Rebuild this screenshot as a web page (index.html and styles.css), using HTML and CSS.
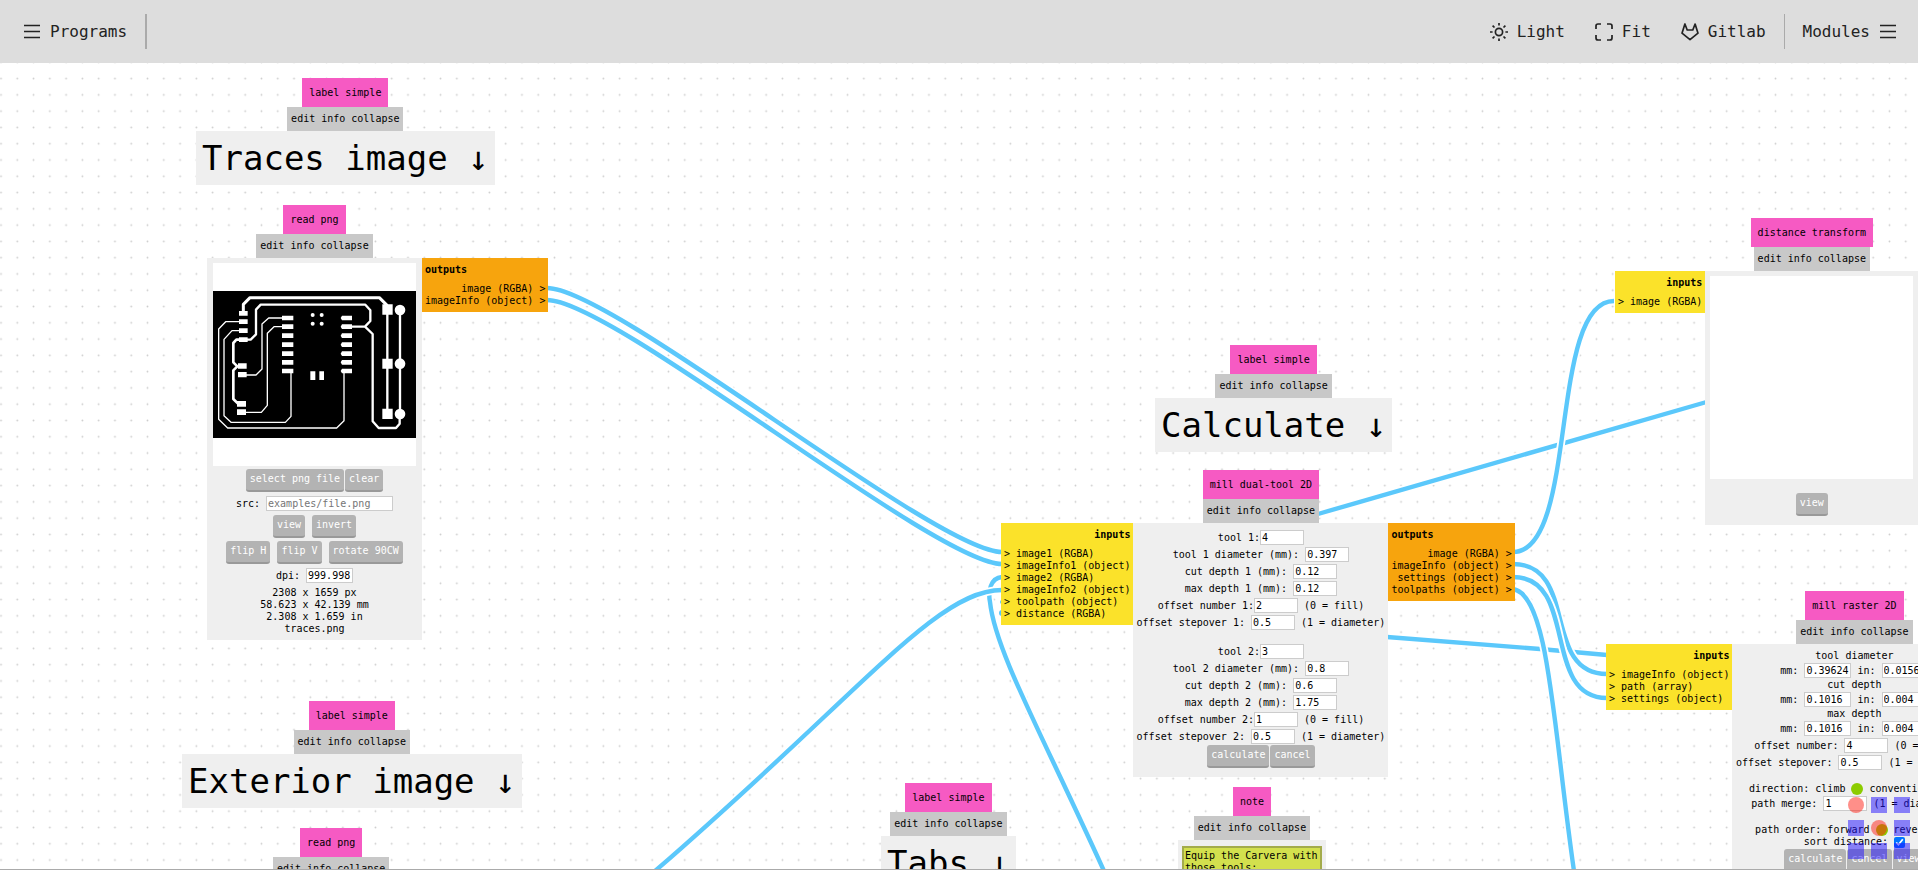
FILE: index.html
```html
<!DOCTYPE html>
<html lang="en">
<head>
<meta charset="utf-8">
<title>Programs</title>
<link rel="stylesheet" href="styles.css">
</head>
<body>
<header class="bar">
  <nav class="bar-group">
    <button class="bar-item" type="button"><svg class="icon" viewBox="0 0 18 18"><path d="M1 2.5h16M1 8.5h16M1 14.5h16"/></svg>Programs</button>
    <span class="divider divider-thick"></span>
  </nav>
  <nav class="bar-group">
    <button class="bar-item" type="button"><svg class="icon" viewBox="0 0 18 18"><circle cx="9" cy="9" r="3.6"/><path d="M9 0v2.6M9 15.4V18M0 9h2.6M15.4 9H18M2.6 2.6l1.9 1.9M13.5 13.5l1.9 1.9M2.6 15.4l1.9-1.9M13.5 4.5l1.9-1.9"/></svg>Light</button>
    <button class="bar-item" type="button"><svg class="icon" viewBox="0 0 18 18"><path d="M1 6V3q0-2 2-2h3M12 1h3q2 0 2 2v3M17 12v3q0 2-2 2h-3M6 17H3q-2 0-2-2v-3"/></svg>Fit</button>
    <a class="bar-item" href="#gitlab"><svg class="icon" viewBox="0 0 18 18"><path d="M3.9 1L1 10.2 9 16.6l8-6.4L14.1 1l-2.3 6H6.2z"/></svg>Gitlab</a>
    <span class="divider"></span>
    <button class="bar-item" type="button">Modules<svg class="icon" viewBox="0 0 18 18"><path d="M1 2.5h16M1 8.5h16M1 14.5h16"/></svg></button>
  </nav>
</header>

<main class="board">
  <svg class="wires" aria-hidden="true">
    <defs>
      <pattern id="dots" patternUnits="userSpaceOnUse" x="9.14" y="7.46" width="16.28" height="16.28"><circle cx="8.14" cy="8.14" r=".9" fill="#ccc"/></pattern>
      <path id="w1" d="M1002 577C990 578 988 592 990 602C995 650 1040 730 1104 871"/>
      <path id="w2" d="M1002 590C936 590 860 694 655 871"/>
      <path id="w3" d="M547 288C613 288 936 552 1002 552"/>
      <path id="w4" d="M547 300C613 300 936 564 1002 564"/>
      <path id="w5" d="M1318 514L1710 401"/>
      <path id="w6" d="M1387 637L1540 649L1607 655"/>
      <path id="w7" d="M1513 552C1579 552 1548 301 1614 301"/>
      <path id="w8" d="M1513 564C1579 564 1541 674 1607 674"/>
      <path id="w9" d="M1513 577C1579 577 1541 698 1607 698"/>
      <path id="w10" d="M1513 589C1549 595 1553 725 1574 871"/>
    </defs>
    <rect width="100%" height="100%" fill="url(#dots)"/>
    <g transform="translate(0 -63)">
      <use href="#w1" class="halo"/><use href="#w1" class="wire"/>
      <use href="#w2" class="halo"/><use href="#w2" class="wire"/>
      <use href="#w3" class="halo"/><use href="#w3" class="wire"/>
      <use href="#w4" class="halo"/><use href="#w4" class="wire"/>
      <use href="#w5" class="halo"/><use href="#w5" class="wire"/>
      <use href="#w6" class="halo"/><use href="#w6" class="wire"/>
      <use href="#w7" class="halo"/><use href="#w7" class="wire"/>
      <use href="#w8" class="halo"/><use href="#w8" class="wire"/>
      <use href="#w9" class="halo"/><use href="#w9" class="wire"/>
      <use href="#w10" class="halo"/><use href="#w10" class="wire"/>
      <circle cx="1002" cy="602" r="2" class="stub"/><circle cx="1002" cy="613" r="3" class="stub"/>
    </g>
  </svg>

  <section class="node node-traces">
    <h2 class="title">label simple</h2>
    <div class="tools"><button type="button">edit</button><button type="button">info</button><button type="button">collapse</button></div>
    <div class="body heading">Traces image ↓</div>
  </section>

  <section class="node node-read">
    <h2 class="title">read png</h2>
    <div class="tools"><button type="button">edit</button><button type="button">info</button><button type="button">collapse</button></div>
    <div class="body stack">
      <div class="preview">
        <svg class="pcb" viewBox="39 36 609 441">
          <path fill="#000" d="M39 36h609v441H39z"/>
          <g fill="none" stroke="#fff" stroke-linejoin="round">
            <path stroke-width="9" d="M130 100V76l20-20h388l24 24"/>
            <path stroke-width="7" d="M130 182h22l16-16V92l14-15h314l15 17v32l-16 17h-45M495 143l23 22v262l18 20h52l11-13v-30"/>
            <path stroke-width="8" d="M127 182h-18l-9 10v58l12 12-12 12v86l14 14h12"/>
            <path stroke-width="7" d="M562 92v312M600 92v312"/>
            <path stroke-width="4" d="M248 117h-42l-20 18v135l-18 18h-30M248 143h-26l-20 20v216l-18 21h-48M120 155H96l-24 26v229l21 20h163l17-18V282M120 128H77l-21 22v271l27 26h327l22-22V282"/>
          </g>
          <g fill="#fff">
            <path d="M117 96h26v14h-26zM117 121h26v14h-26zM117 148h26v14h-26zM117 175h26v14h-26zM114 253h26v16h-26zM114 279h26v16h-26zM111 366h27v17h-27zM111 391h27v17h-27z"/>
            <path d="M246 110h34v14h-34zM246 136h34v14h-34zM246 163h34v14h-34zM246 190h34v14h-34zM246 217h34v14h-34zM246 243h34v14h-34zM246 269h34v14h-34z"/>
            <path d="M426 110h30v14h-30l-4-7zM426 136h30v14h-30l-4-7zM426 163h30v14h-30l-4-7zM426 190h30v14h-30l-4-7zM426 217h30v14h-30l-4-7zM426 243h30v14h-30l-4-7zM426 269h30v14h-30l-4-7z"/>
            <path d="M331 277h15v26h-15zM358 277h14v26h-14zM547 76h31v31h-31zM547 239h31v30h-31zM547 389h31v31h-31z"/>
            <circle cx="600" cy="93" r="16"/><circle cx="600" cy="254" r="16"/><circle cx="600" cy="405" r="16"/>
            <circle cx="338" cy="108" r="6"/><circle cx="365" cy="108" r="6"/><circle cx="338" cy="134" r="6"/><circle cx="365" cy="134" r="6"/>
          </g>
        </svg>
      </div>
      <div class="row"><button class="btn" type="button">select png file</button><button class="btn" type="button">clear</button></div>
      <div class="field"><label for="src">src: </label><input id="src" class="wide" type="text" placeholder="examples/file.png"></div>
      <div class="row spaced"><button class="btn" type="button">view</button><button class="btn" type="button">invert</button></div>
      <div class="row spaced"><button class="btn" type="button">flip H</button><button class="btn" type="button">flip V</button><button class="btn" type="button">rotate 90CW</button></div>
      <div class="field"><label for="dpi">dpi: </label><input id="dpi" class="mid" type="text" value="999.998"></div>
      <div class="info"><span>2308 x 1659 px</span><span>58.623 x 42.139 mm</span><span>2.308 x 1.659 in</span><span>traces.png</span></div>
    </div>
    <div class="ports outputs"><h3>outputs</h3><span>image (RGBA) &gt;</span><span>imageInfo (object) &gt;</span></div>
  </section>

  <section class="node node-exterior">
    <h2 class="title">label simple</h2>
    <div class="tools"><button type="button">edit</button><button type="button">info</button><button type="button">collapse</button></div>
    <div class="body heading">Exterior image ↓</div>
  </section>

  <section class="node node-read-two">
    <h2 class="title">read png</h2>
    <div class="tools"><button type="button">edit</button><button type="button">info</button><button type="button">collapse</button></div>
  </section>

  <section class="node node-tabs">
    <h2 class="title">label simple</h2>
    <div class="tools"><button type="button">edit</button><button type="button">info</button><button type="button">collapse</button></div>
    <div class="body heading">Tabs ↓</div>
  </section>

  <section class="node node-note">
    <h2 class="title">note</h2>
    <div class="tools"><button type="button">edit</button><button type="button">info</button><button type="button">collapse</button></div>
    <div class="body note-body"><textarea class="note" aria-label="note">Equip the Carvera with those tools:</textarea></div>
  </section>

  <section class="node node-calculate">
    <h2 class="title">label simple</h2>
    <div class="tools"><button type="button">edit</button><button type="button">info</button><button type="button">collapse</button></div>
    <div class="body heading">Calculate ↓</div>
  </section>

  <section class="node node-dual">
    <h2 class="title">mill dual-tool 2D</h2>
    <div class="tools"><button type="button">edit</button><button type="button">info</button><button type="button">collapse</button></div>
    <div class="ports inputs"><h3>inputs</h3><span>&gt; image1 (RGBA)</span><span>&gt; imageInfo1 (object)</span><span>&gt; image2 (RGBA)</span><span>&gt; imageInfo2 (object)</span><span>&gt; toolpath (object)</span><span>&gt; distance (RGBA)</span></div>
    <div class="body form form-dual">
      <div class="field"><label for="t1">tool 1:</label><input id="t1" type="text" value="4"></div>
      <div class="field"><label for="d1">tool 1 diameter (mm): </label><input id="d1" type="text" value="0.397"></div>
      <div class="field"><label for="c1">cut depth 1 (mm): </label><input id="c1" type="text" value="0.12"></div>
      <div class="field"><label for="m1">max depth 1 (mm): </label><input id="m1" type="text" value="0.12"></div>
      <div class="field"><label for="n1">offset number 1:</label><input id="n1" type="text" value="2"> (0 = fill)</div>
      <div class="field"><label for="s1">offset stepover 1: </label><input id="s1" type="text" value="0.5"> (1 = diameter)</div>
      <div class="blank"></div>
      <div class="field"><label for="t2">tool 2:</label><input id="t2" type="text" value="3"></div>
      <div class="field"><label for="d2">tool 2 diameter (mm): </label><input id="d2" type="text" value="0.8"></div>
      <div class="field"><label for="c2">cut depth 2 (mm): </label><input id="c2" type="text" value="0.6"></div>
      <div class="field"><label for="m2">max depth 2 (mm): </label><input id="m2" type="text" value="1.75"></div>
      <div class="field"><label for="n2">offset number 2:</label><input id="n2" type="text" value="1"> (0 = fill)</div>
      <div class="field"><label for="s2">offset stepover 2: </label><input id="s2" type="text" value="0.5"> (1 = diameter)</div>
      <div class="row"><button class="btn" type="button">calculate</button><button class="btn" type="button">cancel</button></div>
    </div>
    <div class="ports outputs"><h3>outputs</h3><span>image (RGBA) &gt;</span><span>imageInfo (object) &gt;</span><span>settings (object) &gt;</span><span>toolpaths (object) &gt;</span></div>
  </section>

  <section class="node node-distance">
    <h2 class="title">distance transform</h2>
    <div class="tools"><button type="button">edit</button><button type="button">info</button><button type="button">collapse</button></div>
    <div class="ports inputs"><h3>inputs</h3><span>&gt; image (RGBA)</span></div>
    <div class="body distance">
      <div class="preview"></div>
      <button class="btn" type="button">view</button>
    </div>
  </section>

  <section class="node node-raster">
    <h2 class="title">mill raster 2D</h2>
    <div class="tools"><button type="button">edit</button><button type="button">info</button><button type="button">collapse</button></div>
    <div class="ports inputs"><h3>inputs</h3><span>&gt; imageInfo (object)</span><span>&gt; path (array)</span><span>&gt; settings (object)</span></div>
    <div class="body form form-raster">
      <div class="line">tool diameter</div>
      <div class="field"><label for="r1">mm: </label><input id="r1" class="mid" type="text" value="0.39624"><label for="r2"> in: </label><input id="r2" class="mid" type="text" value="0.0156"></div>
      <div class="line">cut depth</div>
      <div class="field"><label for="r3">mm: </label><input id="r3" class="mid" type="text" value="0.1016"><label for="r4"> in: </label><input id="r4" class="mid" type="text" value="0.004"></div>
      <div class="line">max depth</div>
      <div class="field"><label for="r5">mm: </label><input id="r5" class="mid" type="text" value="0.1016"><label for="r6"> in: </label><input id="r6" class="mid" type="text" value="0.004"></div>
      <div class="field"><label for="r7">offset number: </label><input id="r7" type="text" value="4"> (0 = fill)</div>
      <div class="field"><label for="r8">offset stepover: </label><input id="r8" type="text" value="0.5"> (1 = diameter)</div>
      <div class="blank"></div>
      <div class="line">direction: <label for="climb">climb </label><input id="climb" type="radio" name="dir" checked><label for="conv"> conventional </label><input id="conv" class="off" type="radio" name="dir"></div>
      <div class="field"><label for="r9">path merge: </label><input id="r9" type="text" value="1"> (1 = diameter)</div>
      <div class="blank"></div>
      <div class="line">path order: <label for="fwd">forward </label><input id="fwd" type="radio" name="order" checked><label for="rev"> reverse </label><input id="rev" class="off" type="radio" name="order"></div>
      <div class="line"><label for="sort">sort distance: </label><input id="sort" type="checkbox" checked></div>
      <div class="row"><button class="btn" type="button">calculate</button><button class="btn" type="button">cancel</button><button class="btn" type="button">view</button></div>
    </div>
  </section>

  <div class="pad"><i class="round"></i><i></i><i></i><i></i><i class="round"></i><i></i><i></i><i></i><i></i></div>
</main>
</body>
</html>
```
FILE: styles.css
```css
* { box-sizing: border-box; }

body {
  margin: 0;
  height: 100vh;
  display: flex;
  flex-direction: column;
  overflow: hidden;
  background: #fff;
  color: #000;
  font: 10px/12px "DejaVu Sans Mono", "Liberation Mono", monospace;
}

button, input, textarea { font: inherit; color: inherit; margin: 0; }

button { border: 0; padding: 0; background: none; white-space: nowrap; }

/* Top bar */
.bar {
  display: flex;
  justify-content: space-between;
  padding: 14px 6px 14px 8px;
  background: #ddd;
  font-size: 16px;
  line-height: 35px;
  color: #222;
}

.bar-group { display: flex; }

.bar-item {
  display: flex;
  align-items: center;
  gap: 9px;
  padding: 0 15px;
  color: inherit;
  text-decoration: none;
}

.icon {
  width: 18px;
  height: 18px;
  fill: none;
  stroke: #222;
  stroke-width: 1.7;
  stroke-linecap: butt;
  stroke-linejoin: round;
}

.divider { width: 1px; margin: 0 3px; background: #aaa; }
.divider-thick { width: 2px; }

/* Free canvas */
.board {
  position: relative;
  flex: 1;
  overflow: hidden;
  border-bottom: 1px solid #aaa;
}

.wires { position: absolute; inset: 0; width: 100%; height: 100%; }
.wire { fill: none; stroke: #5bc8fb; stroke-width: 4.4; }
.halo { fill: none; stroke: #fff; stroke-width: 8; }
.stub { fill: #5bc8fb; }

.node {
  position: absolute;
  display: grid;
  grid-template-columns: auto auto auto;
  align-items: start;
}

.node-traces { left: 196px; top: 15px; }
.node-read { left: 207px; top: 142px; }
.node-exterior { left: 182px; top: 638px; }
.node-read-two { left: 273px; top: 765px; }
.node-tabs { left: 881px; top: 720px; }
.node-note { left: 1178px; top: 724px; }
.node-calculate { left: 1155px; top: 282px; }
.node-dual { left: 1001px; top: 407px; }
.node-distance { left: 1615px; top: 155px; }
.node-raster { left: 1606px; top: 528px; }

.title {
  grid-column: 2;
  justify-self: center;
  margin: 0;
  padding: 9px 7px 8px;
  background: #f65ac3;
  font-size: 10px;
  font-weight: normal;
}

.tools {
  grid-column: 2;
  justify-self: center;
  display: flex;
  gap: 6px;
  padding: 6px 4px;
  background: #c8c8c8;
}

.body {
  grid-column: 2;
  grid-row: 3;
  padding: 5px 6px;
  background: #efefef;
}

.heading {
  padding: 6px;
  font-size: 34px;
  line-height: 42px;
  white-space: nowrap;
}

.ports {
  grid-row: 3;
  display: flex;
  flex-direction: column;
  padding: 6px 3px 5px;
  white-space: nowrap;
}

.ports h3 { margin: 0 0 7px; font-size: 10px; }
.inputs { grid-column: 1; background: #fbe22a; }
.inputs h3 { align-self: flex-end; }
.outputs { grid-column: 3; background: #f7a40d; align-items: flex-end; }
.outputs h3 { align-self: flex-start; }

/* Module contents */
.stack { display: flex; flex-direction: column; gap: 3px; align-items: center; }

.preview {
  width: 203px;
  height: 203px;
  display: flex;
  align-items: center;
  background: #fff;
}

.pcb { width: 100%; }
.row { display: flex; justify-content: center; gap: 1px; }
.spaced { gap: 7px; }

.btn {
  height: 23px;
  padding: 0 4px 2px;
  border-bottom: 2px solid #999;
  border-radius: 3px;
  background: #b3b3b3;
  color: #fff;
}

.field {
  height: 17px;
  display: flex;
  align-items: center;
  justify-content: center;
  white-space: pre;
}

input[type="text"] {
  width: 44px;
  height: 15px;
  padding: 0 1px;
  border: 1px solid #ccc;
  background: #fff;
}

input[type="text"].wide { width: 127px; }
input[type="text"].mid { width: 47px; }

.line {
  height: 12px;
  display: flex;
  align-items: center;
  justify-content: center;
  white-space: pre;
}

input[type="radio"] {
  appearance: none;
  flex: none;
  width: 12px;
  height: 12px;
  border-radius: 50%;
  background: #8ccc00;
}

input[type="radio"].off { background: #ccc; }
input[type="checkbox"] { width: 11px; height: 11px; }
.info { display: flex; flex-direction: column; align-items: center; }
.blank { height: 12px; }
.form-dual { width: 255px; padding: 6px 0 9px; }
.form-raster { width: 244px; padding: 6px 0 9px; }
.form-raster .row { margin-top: 1px; }

.distance {
  display: flex;
  flex-direction: column;
  align-items: center;
  gap: 14px;
  width: 213px;
  padding-bottom: 9px;
}

.note-body { padding: 6px 4px; }

.note {
  display: block;
  width: 140px;
  height: 60px;
  padding: 2px 1px;
  border: 2px solid #a3ab4b;
  background: #d3e04e;
  resize: none;
  overflow: hidden;
}

/* Translucent navigation pad */
.pad {
  position: absolute;
  right: 8px;
  bottom: 10px;
  display: grid;
  grid-template-columns: repeat(3, 16px);
  gap: 7px;
}

.pad i { height: 16px; background: rgba(32, 16, 255, .5); }
.pad i.round { border-radius: 50%; background: rgba(255, 32, 20, .5); }
```
